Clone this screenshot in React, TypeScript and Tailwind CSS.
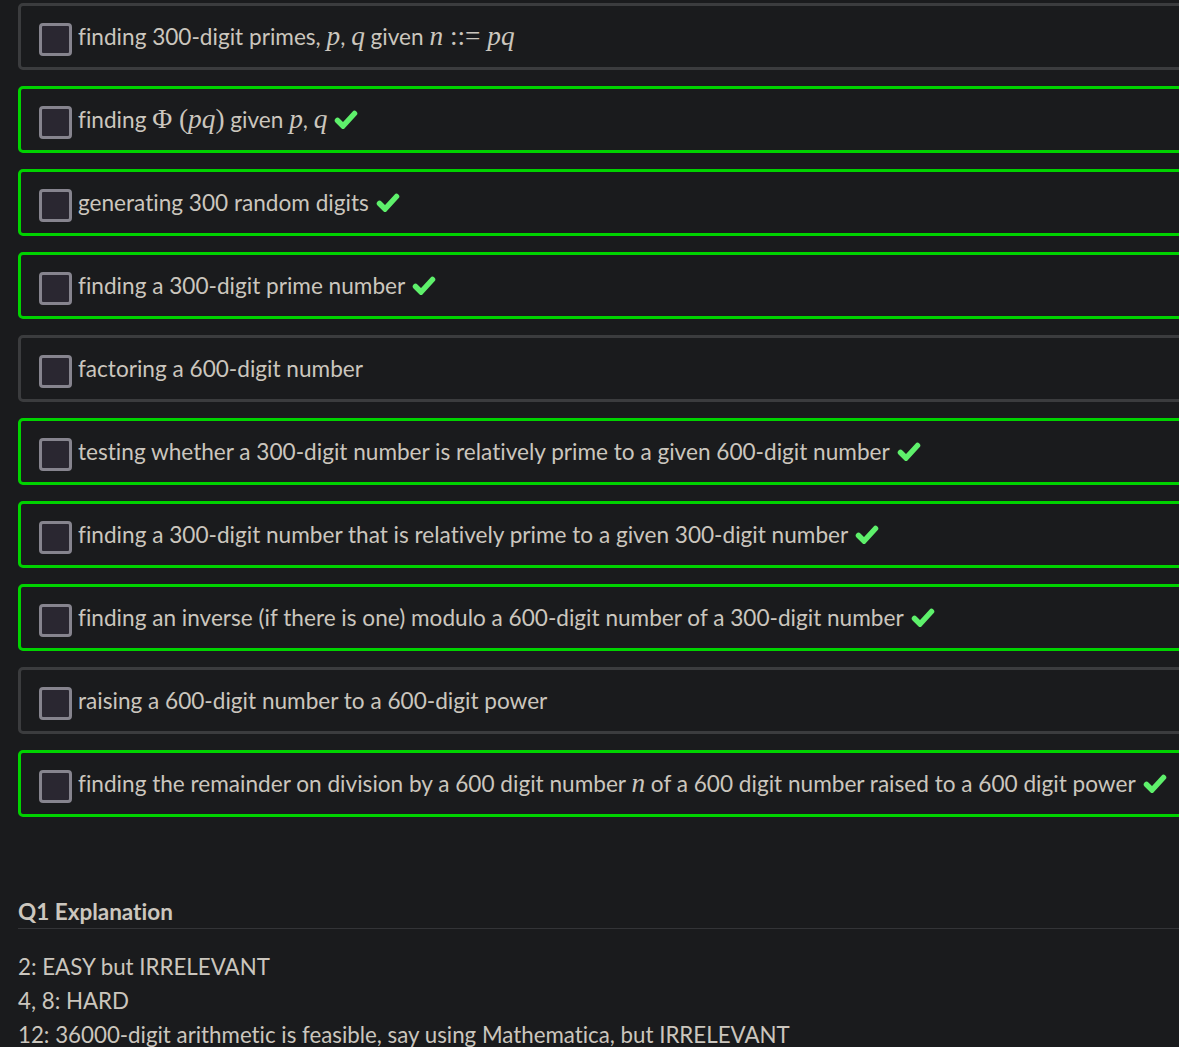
import React from "react";

const M = ({ children }: { children: React.ReactNode }) => (
  <span className="italic text-[1.21em] leading-none" style={{ fontFamily: '"Liberation Serif", serif' }}>
    {children}
  </span>
);
const R = ({ children }: { children: React.ReactNode }) => (
  <span className="not-italic text-[1.21em] leading-none" style={{ fontFamily: '"Liberation Serif", serif' }}>
    {children}
  </span>
);

const Check = () => (
  <svg viewBox="0 0 24 19" className="ml-[7px] w-[24px] h-[19px] shrink-0" aria-hidden>
    <path
      d="M3.5 10.5 L9 16 L20.5 3.5"
      fill="none"
      stroke="#5ef06b"
      strokeWidth="5.5"
      strokeLinecap="round"
      strokeLinejoin="miter"
    />
  </svg>
);

type Item = { content: React.ReactNode; ok: boolean };

const items: Item[] = [
  {
    ok: false,
    content: (
      <>
        finding 300-digit primes, <M>p</M>, <M>q</M> given <M>n</M>
        <R>&nbsp;::=&nbsp;</R>
        <M>pq</M>
      </>
    ),
  },
  {
    ok: true,
    content: (
      <>
        finding <R>Φ&nbsp;(</R>
        <M>pq</M>
        <R>)</R> given <M>p</M>, <M>q</M>
      </>
    ),
  },
  { ok: true, content: <>generating 300 random digits</> },
  { ok: true, content: <>finding a 300-digit prime number</> },
  { ok: false, content: <>factoring a 600-digit number</> },
  {
    ok: true,
    content: <>testing whether a 300-digit number is relatively prime to a given 600-digit number</>,
  },
  {
    ok: true,
    content: <>finding a 300-digit number that is relatively prime to a given 300-digit number</>,
  },
  {
    ok: true,
    content: <>finding an inverse (if there is one) modulo a 600-digit number of a 300-digit number</>,
  },
  { ok: false, content: <>raising a 600-digit number to a 600-digit power</> },
  {
    ok: true,
    content: (
      <>
        finding the remainder on division by a 600 digit number <M>n</M> of a 600 digit number raised
        to a 600 digit power
      </>
    ),
  },
];

export default function App() {
  return (
    <div
      className="w-[1179px] h-[1047px] overflow-hidden bg-[#1a1b1d] text-[#cbc6be] [font-variant-ligatures:none]"
      style={{ fontFamily: 'Lato, "Noto Sans", sans-serif' }}
    >
      <div className="pl-[18px] pt-[3px] flex flex-col gap-[16px]">
        {items.map((it, i) => (
          <div
            key={i}
            className={`w-[1200px] h-[67px] rounded-[5px] border-[3px] flex items-center pl-[18px] ${
              it.ok ? "border-[#00d300]" : "border-[#3b3c3e]"
            }`}
          >
            <div className="mt-[6px] w-[33px] h-[33px] shrink-0 rounded-[4px] border-[3px] border-[#86848e] bg-[#2a2731]" />
            <div className="ml-[6px] mt-[1px] text-[22.6px] whitespace-nowrap flex items-center">
              <span>{it.content}</span>
              {it.ok && <Check />}
            </div>
          </div>
        ))}
      </div>
      <div className="pl-[18px] mt-[81px]">
        <div className="w-[1200px] border-b border-[#333437] pb-[2px]">
          <div className="text-[22.5px] font-bold leading-[28px]">Q1 Explanation</div>
        </div>
        <div className="mt-[21px] text-[22.3px] leading-[34px]">
          <div>2: EASY but IRRELEVANT</div>
          <div>4, 8: HARD</div>
          <div>12: 36000-digit arithmetic is feasible, say using Mathematica, but IRRELEVANT</div>
        </div>
      </div>
    </div>
  );
}
